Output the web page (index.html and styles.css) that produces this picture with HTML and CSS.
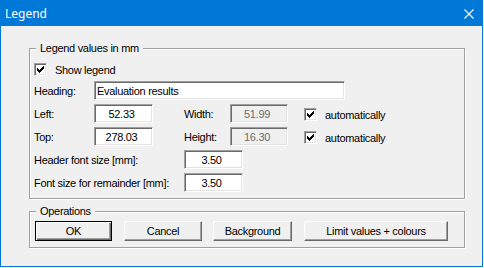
FILE: index.html
```html
<!DOCTYPE html>
<html lang="en">
<head>
	<meta charset="UTF-8">
	<title>Legend</title>
	<link rel="stylesheet" href="styles.css">
</head>
<body>
	<div class="window">
		<div class="titlebar">
			<span class="title">Legend</span>
			<svg class="close" width="10" height="10" viewBox="0 0 10 10">
				<path d="M0.5 0.5 L9.5 9.5 M9.5 0.5 L0.5 9.5" stroke="#fff" stroke-width="1.1" fill="none" />
			</svg>
		</div>
		<div class="client">
			<fieldset class="group group-values">
				<legend>Legend values in mm</legend>
				<div class="check-row">
					<span class="check">
						<svg width="7" height="7" viewBox="0 0 7 7" shape-rendering="crispEdges">
							<path d="M6 0h1v1h-1z M5 1h2v1h-2z M0 2h1v1h-1z M4 2h3v1h-3z M0 3h2v1h-2z M3 3h3v1h-3z M0 4h5v1h-5z M1 5h3v1h-3z M2 6h1v1h-1z" fill="#000" />
						</svg>
					</span>
					<span class="check-text">Show legend</span>
				</div>
				<div class="row">
					<span class="lbl">Heading:</span>
					<input class="field field-text" type="text" value="Evaluation results">
				</div>
				<div class="row">
					<span class="lbl">Left:</span>
					<input class="field field-num" type="text" value="52.33">
					<span class="lbl lbl-mid">Width:</span>
					<input class="field field-num field-off" type="text" value="51.99" disabled>
					<div class="check-row auto">
						<span class="check">
							<svg width="7" height="7" viewBox="0 0 7 7" shape-rendering="crispEdges">
								<path d="M6 0h1v1h-1z M5 1h2v1h-2z M0 2h1v1h-1z M4 2h3v1h-3z M0 3h2v1h-2z M3 3h3v1h-3z M0 4h5v1h-5z M1 5h3v1h-3z M2 6h1v1h-1z" fill="#000" />
							</svg>
						</span>
						<span class="check-text">automatically</span>
					</div>
				</div>
				<div class="row">
					<span class="lbl">Top:</span>
					<input class="field field-num" type="text" value="278.03">
					<span class="lbl lbl-mid">Height:</span>
					<input class="field field-num field-off" type="text" value="16.30" disabled>
					<div class="check-row auto">
						<span class="check">
							<svg width="7" height="7" viewBox="0 0 7 7" shape-rendering="crispEdges">
								<path d="M6 0h1v1h-1z M5 1h2v1h-2z M0 2h1v1h-1z M4 2h3v1h-3z M0 3h2v1h-2z M3 3h3v1h-3z M0 4h5v1h-5z M1 5h3v1h-3z M2 6h1v1h-1z" fill="#000" />
							</svg>
						</span>
						<span class="check-text">automatically</span>
					</div>
				</div>
				<div class="row">
					<span class="lbl lbl-long">Header font size [mm]:</span>
					<input class="field field-num" type="text" value="3.50">
				</div>
				<div class="row">
					<span class="lbl lbl-long">Font size for remainder [mm]:</span>
					<input class="field field-num" type="text" value="3.50">
				</div>
			</fieldset>

			<fieldset class="group group-ops">
				<legend>Operations</legend>
				<div class="buttons">
					<button class="btn btn-default btn-ok">OK</button>
					<button class="btn btn-cancel">Cancel</button>
					<button class="btn btn-bg">Background</button>
					<button class="btn btn-limit">Limit values + colours</button>
				</div>
			</fieldset>
		</div>
	</div>
</body>
</html>
```

FILE: styles.css
```css
* {
	margin: 0;
	padding: 0;
	box-sizing: border-box;
}
body {
	background-color: #fff;
	font: 11px "Liberation Sans", Arial, sans-serif;
	letter-spacing: -0.3px;
	color: #000;
	white-space: nowrap;
}
.window {
	width: 483px;
	height: 267px;
	border: 1px solid #0078d7;
	background-color: #f0f0f0;
}
.titlebar {
	height: 25px;
	background-color: #0078d7;
	color: #fff;
	display: flex;
	align-items: center;
	justify-content: space-between;
	padding: 0 8px 0 4px;
	font: 12px "Noto Sans", sans-serif;
	letter-spacing: 0;
}
.close {
	display: block;
}
.client {
	padding: 16px 0 0 28px;
}

/* group boxes */
.group {
	width: 436px;
	border: 1px solid #a0a0a0;
	box-shadow: inset 1px 1px 0 #fff, 1px 1px 0 #fff;
	padding: 8px 0 6px 4px;
}
.group legend {
	padding: 0 4px;
	margin-left: 2px;
	line-height: 13px;
	background-color: #f0f0f0;
}
.group-ops {
	margin-top: 6px;
	padding-top: 3px;
}

/* checkboxes */
.check-row {
	display: flex;
	align-items: center;
	height: 13px;
	margin-bottom: 5px;
}
.check {
	width: 13px;
	height: 13px;
	border: 1px solid;
	border-color: #a0a0a0 #fff #fff #a0a0a0;
	box-shadow: inset 1px 1px 0 #696969, inset -1px -1px 0 #e3e3e3;
	background-color: #fff;
	display: flex;
	align-items: center;
	justify-content: center;
}
.check svg {
	display: block;
}
.check-text {
	margin-left: 8px;
}
.auto {
	margin: 2px 0 0 16px;
}

/* label + field rows */
.row {
	display: flex;
	align-items: center;
	height: 19px;
	margin-bottom: 4px;
}
.row:last-child {
	margin-bottom: 0;
}
.lbl {
	width: 60px;
}
.lbl-mid {
	width: 46px;
	margin-left: 31px;
}
.lbl-long {
	width: 150px;
}
.field {
	height: 19px;
	font: inherit;
	letter-spacing: inherit;
	color: #000;
	border: 1px solid;
	border-color: #a0a0a0 #fff #fff #a0a0a0;
	box-shadow: inset 1px 1px 0 #696969, inset -1px -1px 0 #e3e3e3;
	background-color: #fff;
	outline: none;
}
.field-text {
	width: 251px;
	padding: 0 2px;
}
.field-num {
	width: 59px;
	text-align: center;
	padding: 0 5px 0 1px;
}
.field-off {
	width: 58px;
	background-color: #f0f0f0;
	color: #6d6d6d;
	-webkit-text-fill-color: #6d6d6d;
	opacity: 1;
}

/* buttons */
.buttons {
	display: flex;
	margin-left: 1px;
}
.btn {
	height: 20px;
	padding: 0;
	font: inherit;
	letter-spacing: inherit;
	color: #000;
	background-color: #f0f0f0;
	border: 1px solid;
	border-color: #fff #696969 #696969 #fff;
	box-shadow: inset -1px -1px 0 #a0a0a0;
}
.btn-default {
	border-color: #000;
	box-shadow: inset 1px 1px 0 #fff, inset -1px -1px 0 #696969, inset -2px -2px 0 #a0a0a0;
}
.btn-ok {
	width: 77px;
}
.btn-cancel {
	width: 78px;
	margin-left: 12px;
}
.btn-bg {
	width: 79px;
	margin-left: 11px;
}
.btn-limit {
	width: 144px;
	margin-left: 12px;
}
```
